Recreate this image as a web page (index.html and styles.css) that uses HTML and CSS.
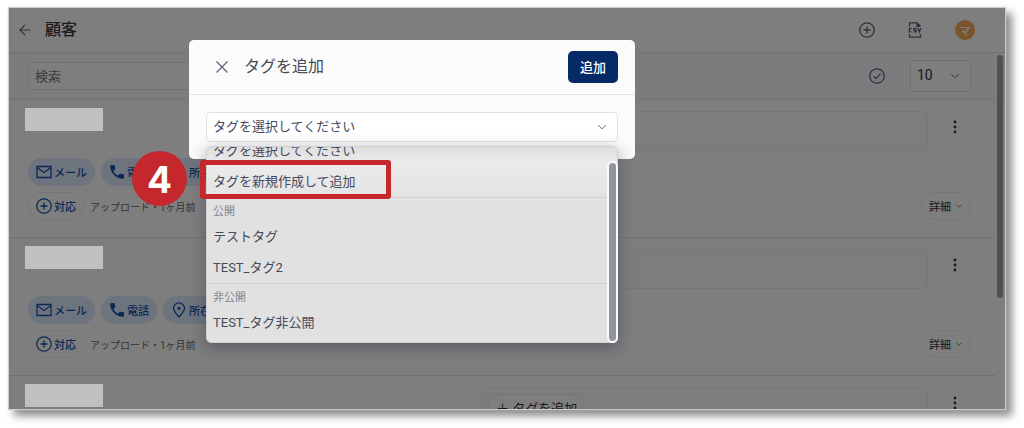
FILE: index.html
```html
<!DOCTYPE html>
<html lang="ja">
<head>
    <meta charset="UTF-8">
    <meta name="viewport" content="width=device-width, initial-scale=1.0">
    <title>顧客</title>
    <link rel="stylesheet" href="styles.css">
</head>
<body>
<svg class="sprite" aria-hidden="true">
    <symbol id="i-mail" viewBox="0 0 16 16"><path d="M1 2.5h14v11H1zM1 3.5l7 5 7-5"/></symbol>
    <symbol id="i-phone" viewBox="0 0 16 16"><path class="solid" d="M1.2 1.2 4.8 1c.5 0 .9.3 1 .8l.5 2.6c.1.4 0 .8-.3 1.1L4.4 7c1 2 2.6 3.6 4.6 4.6l1.6-1.600c.3-.3.7-.4 1.1-.3l2.600.5c.5.1.8.5.8 1l-.1 3.400C7 15.200.8 8.500 1.200 1.200z"/></symbol>
    <symbol id="i-pin" viewBox="0 0 16 16"><path d="M8 15C4.5 11.200 2.5 8.700 2.5 6.300a5.500 5.500 0 0 1 11 0C13.500 8.700 11.500 11.200 8 15z"/><circle class="solid" cx="8" cy="6.300" r="1.500"/></symbol>
    <symbol id="i-plus" viewBox="0 0 16 16"><circle cx="8" cy="8" r="7.200"/><path d="M8 4.500v7M4.500 8h7"/></symbol>
    <symbol id="i-check" viewBox="0 0 16 16"><circle cx="8" cy="8" r="7.200"/><path d="M4.600 8.200l2.400 2.400 4.600-5"/></symbol>
    <symbol id="i-csv" viewBox="0 0 16 16"><path d="M2.500 4.500V.8h7.500l3.500 3.500M2.500 12v3.200h11V12"/><path class="solid" d="M9.300.8l4.200 4.200H9.300z"/><path d="M4.800 6.500H2.300v3.400h2.500M9.300 6.500H6.900v1.700h2.300v1.700H6.700M11 6l1.300 4L13.700 6"/></symbol>
    <symbol id="i-back" viewBox="0 0 16 16"><path d="M14 8H2.500M8 2.200L2.200 8 8 13.800"/></symbol>
    <symbol id="i-close" viewBox="0 0 16 16"><path d="M2.500 2.500l11 11M13.500 2.500l-11 11"/></symbol>
    <symbol id="i-down" viewBox="0 0 16 16"><path d="M3 5.500l5 5 5-5"/></symbol>
    <symbol id="i-dots" viewBox="0 0 16 16"><circle class="solid" cx="8" cy="3" r="1.400"/><circle class="solid" cx="8" cy="8" r="1.400"/><circle class="solid" cx="8" cy="13" r="1.400"/></symbol>
</svg>

<div class="window">
    <header class="topbar">
        <button class="icon-btn" aria-label="戻る"><svg class="icon-m"><use href="#i-back"/></svg></button>
        <h1>顧客</h1>
        <div class="topbar-actions">
            <button class="icon-btn" aria-label="追加"><svg class="icon"><use href="#i-plus"/></svg></button>
            <button class="icon-btn" aria-label="CSV"><svg class="icon"><use href="#i-csv"/></svg></button>
            <button class="avatar">マ</button>
        </div>
    </header>

    <div class="toolbar">
        <input class="search" type="search" placeholder="検索" aria-label="検索">
        <button class="icon-btn" aria-label="選択"><svg class="icon"><use href="#i-check"/></svg></button>
        <div class="select-wrap page-size">
            <select aria-label="表示件数"><option>10</option></select>
            <svg class="icon-s"><use href="#i-down"/></svg>
        </div>
    </div>

    <main>
        <article class="customer">
            <div class="customer-top">
                <div class="name"></div>
                <div class="tags"></div>
                <button class="more" aria-label="メニュー"><svg class="icon"><use href="#i-dots"/></svg></button>
            </div>
            <div class="line">
                <button class="chip"><svg class="icon"><use href="#i-mail"/></svg>メール</button>
                <button class="chip"><svg class="icon"><use href="#i-phone"/></svg>電話</button>
                <button class="chip"><svg class="icon"><use href="#i-pin"/></svg>所在地</button>
            </div>
            <div class="line">
                <button class="chip outline"><svg class="icon"><use href="#i-plus"/></svg>対応</button>
                <span class="meta">アップロード・1ヶ月前</span>
                <button class="detail">詳細<svg class="icon-xs"><use href="#i-down"/></svg></button>
            </div>
        </article>
        <article class="customer">
            <div class="customer-top">
                <div class="name"></div>
                <div class="tags"></div>
                <button class="more" aria-label="メニュー"><svg class="icon"><use href="#i-dots"/></svg></button>
            </div>
            <div class="line">
                <button class="chip"><svg class="icon"><use href="#i-mail"/></svg>メール</button>
                <button class="chip"><svg class="icon"><use href="#i-phone"/></svg>電話</button>
                <button class="chip"><svg class="icon"><use href="#i-pin"/></svg>所在地</button>
            </div>
            <div class="line">
                <button class="chip outline"><svg class="icon"><use href="#i-plus"/></svg>対応</button>
                <span class="meta">アップロード・1ヶ月前</span>
                <button class="detail">詳細<svg class="icon-xs"><use href="#i-down"/></svg></button>
            </div>
        </article>
        <article class="customer">
            <div class="customer-top">
                <div class="name"></div>
                <div class="tags"><button class="add-tag">＋ タグを追加</button></div>
                <button class="more" aria-label="メニュー"><svg class="icon"><use href="#i-dots"/></svg></button>
            </div>
        </article>
    </main>
    <div class="page-scroll"></div>
    <div class="backdrop"></div>

    <section class="modal" role="dialog" aria-labelledby="modalTitle">
        <div class="modal-header">
            <button class="icon-btn" aria-label="閉じる"><svg class="icon"><use href="#i-close"/></svg></button>
            <h2 id="modalTitle">タグを追加</h2>
            <button class="submit">追加</button>
        </div>
        <div class="modal-body">
            <div class="select-wrap">
                <select aria-label="タグ"><option>タグを選択してください</option></select>
                <svg class="icon-s"><use href="#i-down"/></svg>
            </div>
            <div class="menu">
                <div class="menu-list" role="listbox" aria-label="タグ">
                    <div class="option" role="option">タグを選択してください</div>
                    <div class="option" role="option">タグを新規作成して追加</div>
                    <div class="group" role="group">
                        <div class="group-label">公開</div>
                        <div class="option" role="option">テストタグ</div>
                        <div class="option" role="option">TEST_タグ2</div>
                    </div>
                    <div class="group" role="group">
                        <div class="group-label">非公開</div>
                        <div class="option" role="option">TEST_タグ非公開</div>
                    </div>
                </div>
                <div class="menu-scroll"></div>
                <div class="callout"><span class="step">4</span></div>
            </div>
        </div>
    </section>
</div>
</body>
</html>
```

FILE: styles.css
```css
* {
    box-sizing: border-box;
}

body {
    margin: 0;
    background: #fff;
    color: #34343f;
    font-family: Roboto, "Noto Sans CJK JP", sans-serif;
    font-size: 13px;
}

button, input, select {
    font: inherit;
    color: inherit;
}

button {
    border: none;
    background: none;
    padding: 0;
    display: flex;
    align-items: center;
    justify-content: center;
}

h1, h2 {
    margin: 0;
    font-size: 16px;
    line-height: 24px;
}

h1 { font-weight: 500; }
h2 { font-weight: 400; }

.sprite {
    display: none;
}

.icon, .icon-m, .icon-s, .icon-xs {
    width: 16px;
    height: 16px;
    flex: none;
    fill: none;
    stroke: currentColor;
    stroke-width: 1.3;
}

.icon-m { width: 14px; height: 14px; }
.icon-s { width: 12px; height: 12px; }
.icon-xs { width: 8px; height: 8px; }

.solid {
    fill: currentColor;
    stroke: none;
}

.window {
    position: relative;
    height: calc(100vh - 27px);
    min-height: 380px;
    margin: 8px 19px 18px 9px;
    overflow: hidden;
    background: #fdfdfd;
    box-shadow: 0 0 1px 1px #ccc, 6px 6px 8px 1px rgba(0, 0, 0, 0.45);
}

.topbar {
    height: 45px;
    padding: 0 30px 0 8px;
    display: flex;
    align-items: center;
    gap: 12px;
    border-bottom: 1px solid #e4e6ea;
}

.topbar-actions {
    margin-left: auto;
    display: flex;
    align-items: center;
    gap: 32px;
}

.icon-btn {
    width: 16px;
    height: 16px;
    color: #606476;
}

.avatar {
    width: 20px;
    height: 20px;
    border-radius: 50%;
    background: #f4ab58;
    color: #fff;
    font-size: 11px;
    font-weight: 500;
}

.toolbar {
    height: 47px;
    padding: 0 34px 0 19px;
    display: flex;
    align-items: center;
    background: #f4f8fd;
    border-bottom: 1px solid #e4e6ea;
}

.search {
    width: 45%;
    height: 28px;
    margin-right: auto;
    padding: 0 6px;
    border: 1px solid #e4e6ea;
    border-radius: 5px;
    background: #fdfdfd;
}

.search::placeholder {
    color: #777;
}

.select-wrap {
    position: relative;
}

.select-wrap select {
    appearance: none;
    width: 100%;
    height: 30px;
    padding: 0 6px 2px;
    border: 1px solid #dcdfe4;
    border-radius: 5px;
    background: #fff;
}

.select-wrap svg {
    position: absolute;
    top: 0;
    bottom: 0;
    right: 10px;
    margin: auto;
    color: #606476;
}

.page-size {
    width: 61px;
    margin-left: 25px;
}

.page-size select {
    height: 32px;
    background: #fdfdfd;
    font-size: 14px;
}

.customer {
    height: 138px;
    margin-right: 10px;
    padding: 8px 24px 0 19px;
    border-bottom: 1px solid #e0e0e0;
}

.customer-top {
    height: 50px;
    display: grid;
    grid-template-columns: 1fr 1fr 37px;
    gap: 6px;
    align-items: start;
}

/* masked customer name, stays visible above the backdrop */
.name {
    position: relative;
    z-index: 2;
    width: 78px;
    height: 23px;
    margin-left: -3px;
    background: #c0c0c0;
}

.tags {
    height: 40px;
    margin-top: 3px;
    padding: 6px;
    border: 1px solid #eee;
    border-radius: 5px;
    background: #fafafa;
}

.add-tag {
    height: 26px;
    padding: 0 7px;
    border: 1px solid #e8e8e8;
    border-radius: 13px;
    background: #fdfdfd;
}

.more {
    width: 32px;
    height: 16px;
    margin: 11px 0 0 5px;
}

.line {
    display: flex;
    align-items: center;
    gap: 6px;
    margin-bottom: 6px;
    font-size: 11px;
}

.chip {
    height: 28px;
    padding: 0 8px;
    gap: 2px;
    border-radius: 14px;
    background: #dce8fc;
    color: #1450a8;
    font-weight: 500;
}

.chip.outline, .detail {
    border: 1px solid #ececec;
    background: none;
}

.chip.outline {
    padding: 0 7px;
}

.meta {
    color: #666;
    font-size: 10px;
}

.detail {
    width: 50px;
    height: 28px;
    margin-left: auto;
    gap: 4px;
    border-radius: 14px;
}

.page-scroll {
    position: absolute;
    top: 47px;
    right: 2px;
    width: 6px;
    height: 243px;
    border-radius: 3px;
    background: #a0a3a6;
}

.backdrop {
    position: absolute;
    inset: 0;
    z-index: 1;
    background: rgba(0, 0, 0, 0.5);
}

.modal {
    position: absolute;
    z-index: 3;
    top: 32px;
    left: 180px;
    width: 446px;
    border-radius: 5px;
    background: #fbfbfb;
    color: #45495a;
}

.modal-header {
    height: 55px;
    padding: 0 17px 0 25px;
    display: flex;
    align-items: center;
    gap: 14px;
    border-bottom: 1px solid #e0e2e6;
}

.submit {
    width: 50px;
    height: 32px;
    margin-left: auto;
    padding-bottom: 2px;
    border-radius: 5px;
    background: #052a66;
    color: #fff;
    font-weight: 500;
}

.modal-body {
    position: relative;
    padding: 17px;
}

.menu {
    position: absolute;
    top: 51px;
    left: 17px;
    right: 17px;
}

/* content is anchored to the bottom, as when scrolled to the end */
.menu-list {
    height: 197px;
    padding-bottom: 4px;
    overflow: hidden;
    display: flex;
    flex-direction: column;
    justify-content: flex-end;
    border: 1px solid #d0d0d0;
    border-radius: 5px;
    background: linear-gradient(#dedede, #ebebeb 16px, #e1e1e1 60px);
    box-shadow: 0 5px 16px rgba(50, 50, 75, 0.45);
}

.option {
    flex: none;
    height: 31px;
    padding: 0 6px;
    line-height: 31px;
}

.group {
    flex: none;
    border-top: 1px solid #d0d0d0;
}

.group-label {
    padding: 5px 6px 0;
    font-size: 11px;
    line-height: 18px;
    color: #808490;
}

.menu-scroll {
    position: absolute;
    top: 15px;
    right: 0;
    bottom: 0;
    width: 11px;
    border: 2px solid #fafafa;
    border-radius: 6px;
    background: #8f969c;
}

.callout {
    position: absolute;
    top: 14px;
    left: -6px;
    width: 191px;
    height: 39px;
    border: 5px solid #c4282c;
    border-radius: 3px;
}

.step {
    position: absolute;
    top: -14px;
    left: -73px;
    width: 55px;
    height: 55px;
    border-radius: 50%;
    background: #c4282c;
    color: #fff;
    font: 700 37px/57px Inter, sans-serif;
    text-align: center;
}
```
